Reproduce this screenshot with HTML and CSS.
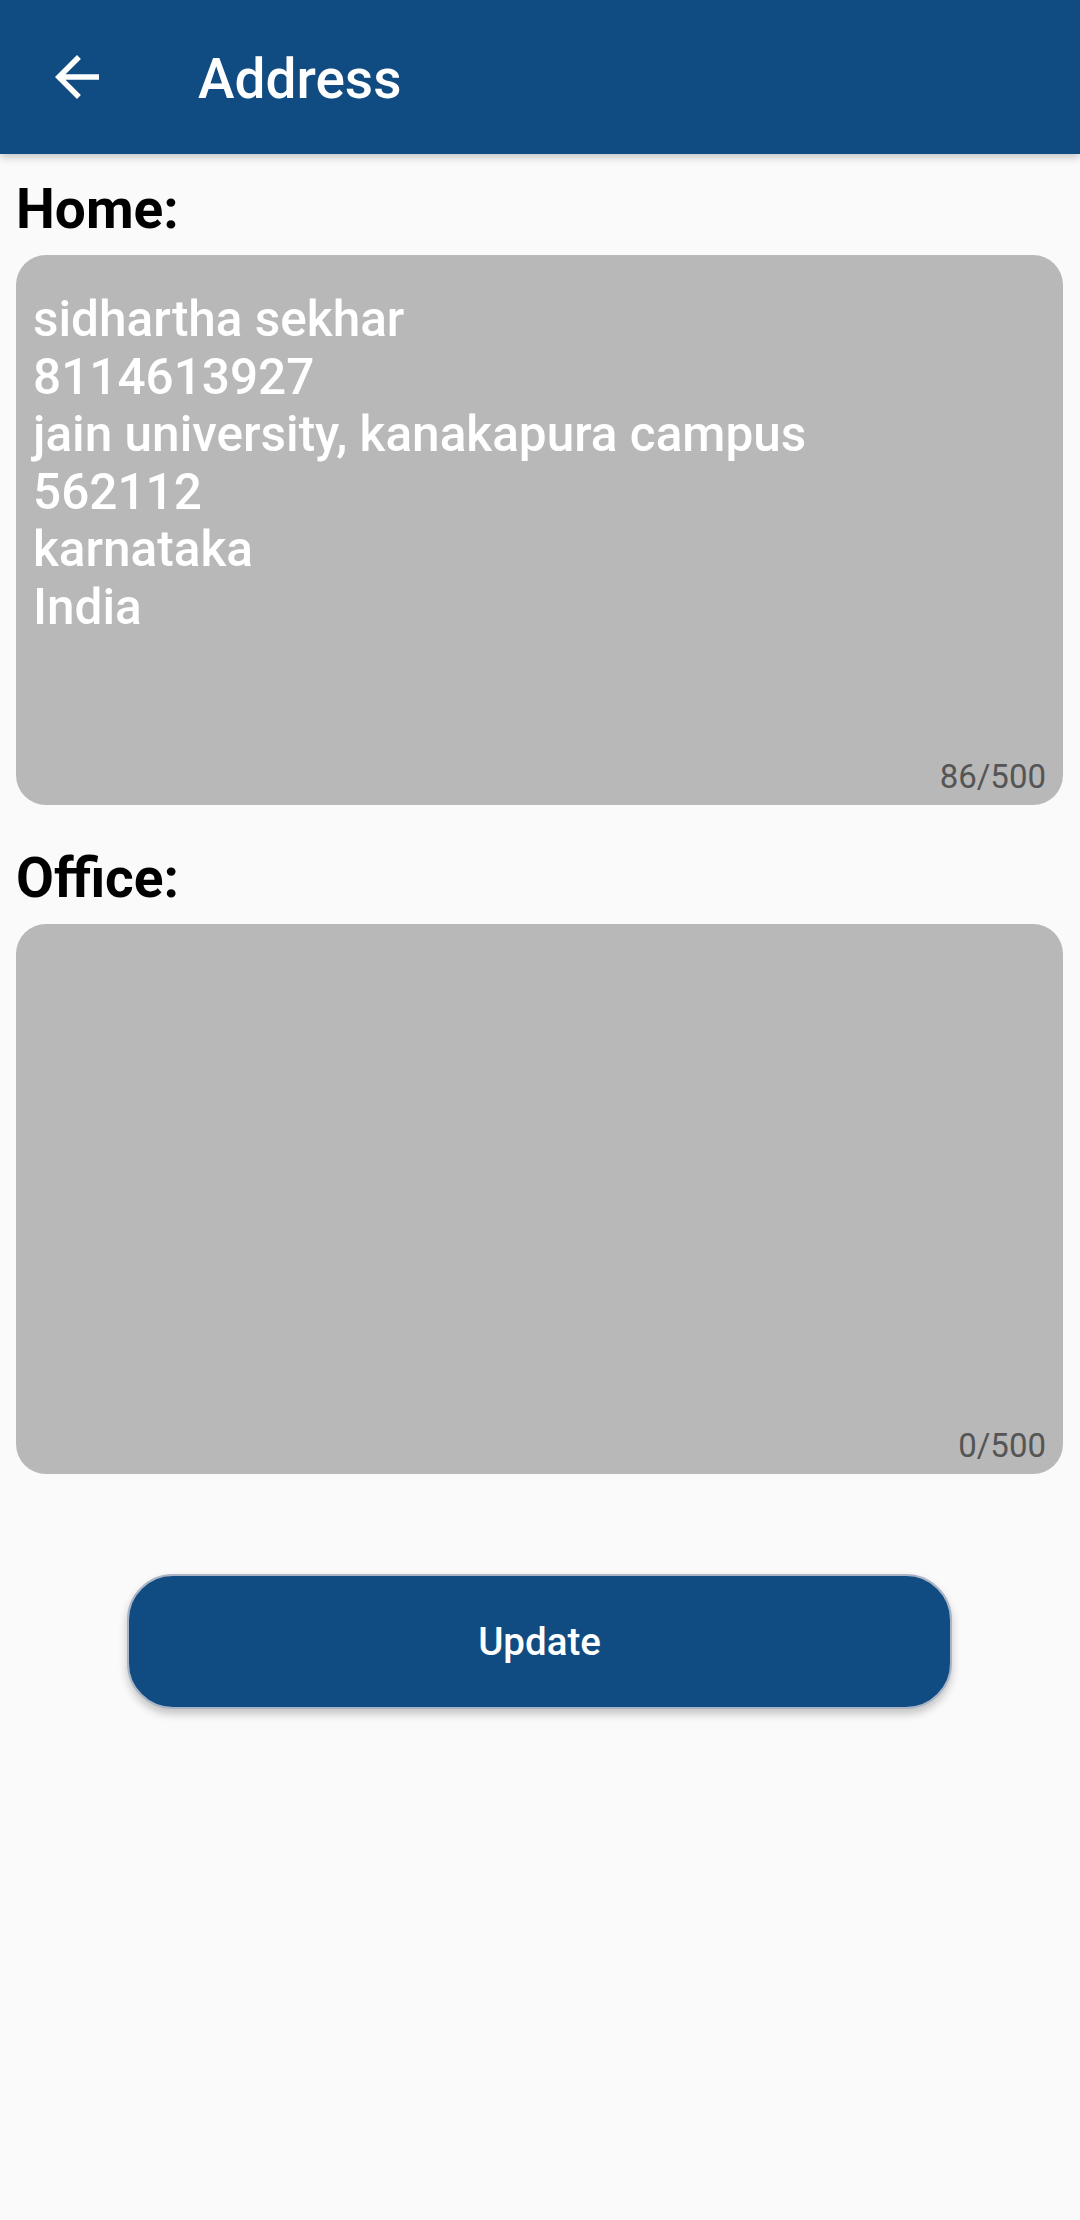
FILE: index.html
```html
<!DOCTYPE html>
<html lang="en">
<head>
<meta charset="utf-8">
<title>Address</title>
<link rel="stylesheet" href="styles.css">
</head>
<body>
<header class="appbar">
  <button class="back" aria-label="Back">
    <svg viewBox="0 0 24 24" width="66" height="66"><path fill="#ffffff" d="M20 11H7.83l5.59-5.59L12 4l-8 8 8 8 1.41-1.41L7.83 13H20v-2z"/></svg>
  </button>
  <h1 class="title">Address</h1>
</header>
<main class="content">
  <section class="field">
    <h2 class="label">Home:</h2>
    <div class="box">
      <div class="value">sidhartha sekhar<br>8114613927<br>jain university, kanakapura campus<br>562112<br>karnataka<br>India</div>
      <div class="counter">86/500</div>
    </div>
  </section>
  <section class="field">
    <h2 class="label">Office:</h2>
    <div class="box">
      <div class="value"></div>
      <div class="counter">0/500</div>
    </div>
  </section>
  <div class="actions">
    <button class="update">Update</button>
  </div>
</main>
</body>
</html>
```
FILE: styles.css
```css
* { box-sizing: border-box; }
html, body {
  margin: 0;
  padding: 0;
  background: #fafafa;
  font-family: Roboto, "Noto Sans", "Liberation Sans", sans-serif;
}
body { width: 1080px; min-height: 2220px; }

.appbar {
  height: 154px;
  background: #104c82;
  display: flex;
  align-items: center;
  box-shadow: 0 3px 8px rgba(0,0,0,0.22);
  position: relative;
  z-index: 2;
}
.back {
  width: 66px;
  height: 66px;
  margin-left: 44px;
  padding: 0;
  border: 0;
  background: none;
  display: flex;
}
.title {
  margin: 0 0 0 88px;
  padding-top: 3px;
  color: #ffffff;
  font-size: 55px;
  font-weight: 500;
  line-height: 64px;
}

.content {
  padding: 23px 17px 0 16px;
}
.field + .field { margin-top: 41px; }
.label {
  margin: 0 0 14px 0;
  font-size: 55px;
  font-weight: 700;
  line-height: 64px;
  color: #000000;
}
.box {
  height: 550px;
  background: #b8b8b8;
  border-radius: 30px;
  padding: 36px 17px 12px 17px;
  display: flex;
  flex-direction: column;
}
.value {
  flex: 1;
  color: #ffffff;
  font-size: 49.5px;
  font-weight: 500;
  line-height: 57.6px;
}
.counter {
  align-self: flex-end;
  font-size: 33px;
  line-height: 33px;
  color: #555555;
}

.actions {
  display: flex;
  justify-content: center;
  margin-top: 100px;
}
.update {
  width: 825px;
  height: 135px;
  background: #104c82;
  color: #ffffff;
  border: 2px solid #aab4c6;
  border-radius: 46px;
  font-family: Roboto, "Noto Sans", sans-serif;
  font-size: 38.5px;
  font-weight: 500;
  box-shadow: 0 5px 8px rgba(0,0,0,0.22);
}
```
